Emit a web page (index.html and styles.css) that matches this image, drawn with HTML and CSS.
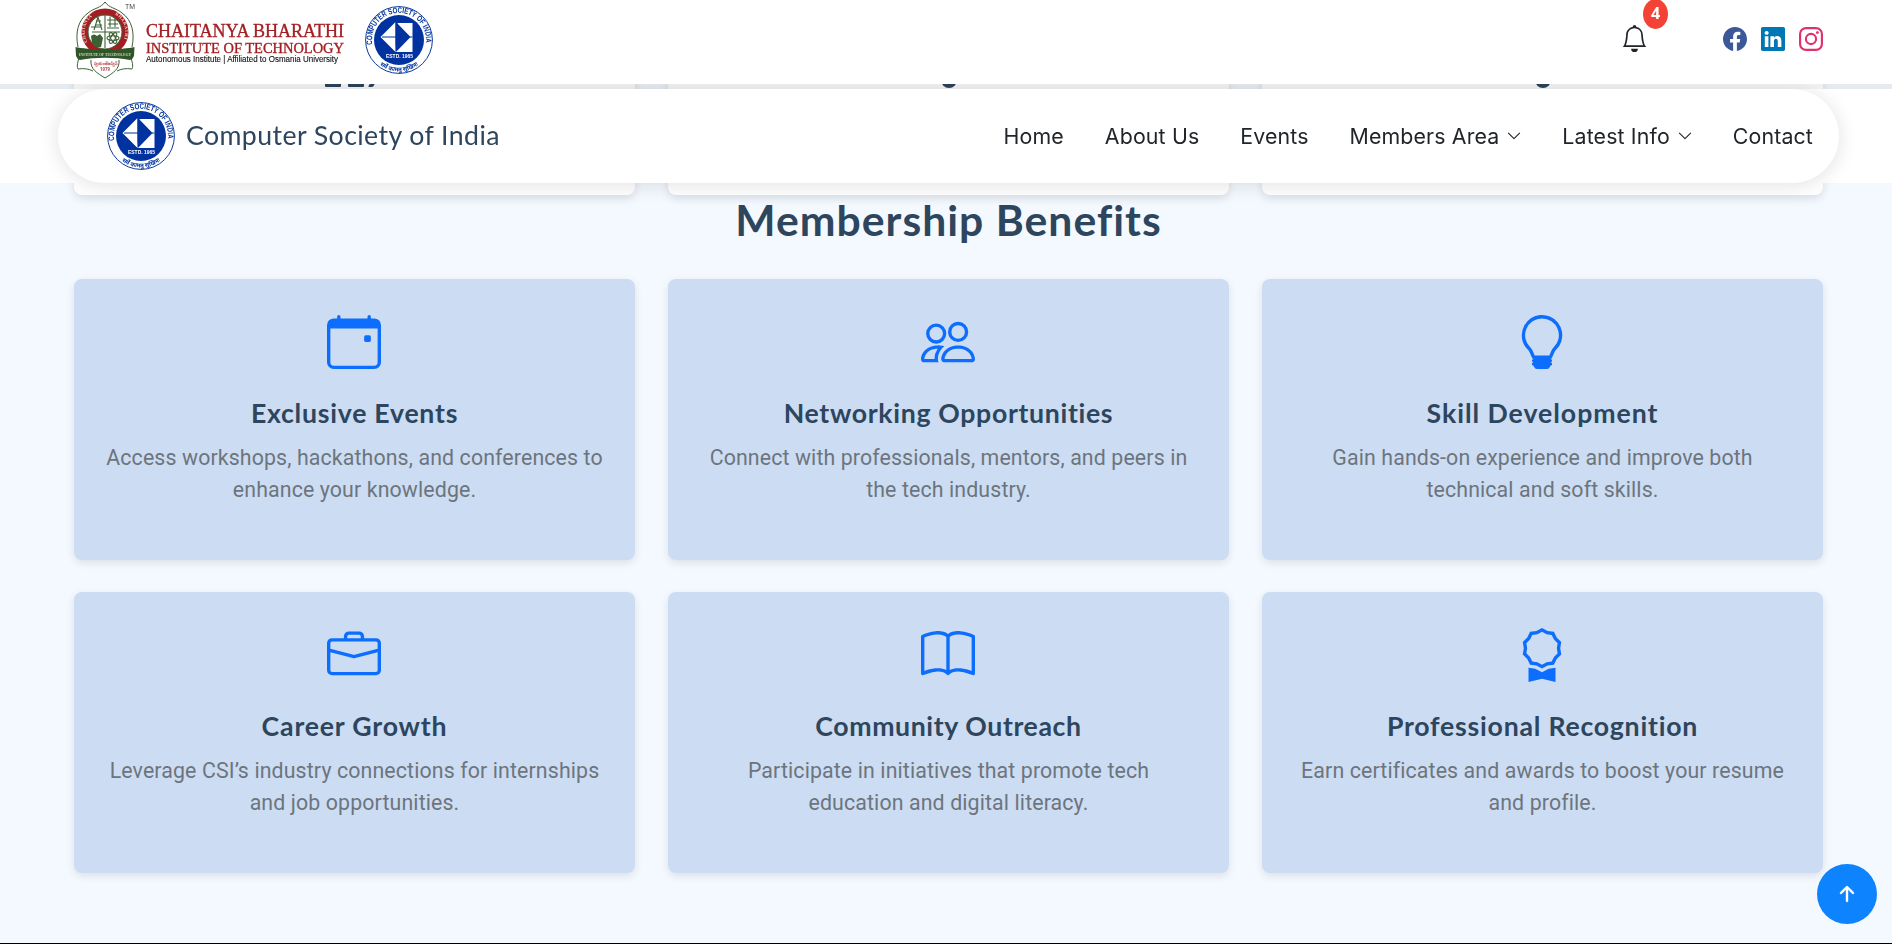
FILE: index.html
```html
<!DOCTYPE html>
<html lang="en">
<head>
<meta charset="utf-8">
<title>Computer Society of India</title>
<link rel="stylesheet" href="styles.css">
</head>
<body>
<header class="topbar">
  <div class="logos">
    <svg class="cbit" viewBox="0 0 276 84" width="276" height="84">
      <g fill="none" stroke="#3c6132" stroke-width="1">
        <path d="M31 2C27 8 20 8 14 13C4 20 1 33 4 47M31 2C35 8 42 8 48 13C58 20 61 33 58 47"/>
        <path d="M5 58C3 64 3 67 4 69C10 68 15 69 19 71M57 58C59 64 59 67 58 69C52 68 47 69 43 71"/>
        <path d="M17 60C16 69 23 73 31 78C39 73 46 69 45 60"/>
      </g>
      <circle cx="31" cy="32" r="23.5" fill="#a31e22"/>
      <circle cx="31" cy="32" r="17" fill="#fff" stroke="#3c6132"/>
      <g fill="none" stroke="#3c6132" stroke-width="1.1">
        <path d="M18 32H46M31 15V48M20 30l4-13 4 13M21 25h7M22 21h5M33 20h12M34 24h10M36 17v10M41 17v10M17 27h10M33 28h12"/>
        <ellipse cx="39" cy="38" rx="6" ry="2.3"/><ellipse cx="39" cy="38" rx="6" ry="2.3" transform="rotate(60 39 38)"/><ellipse cx="39" cy="38" rx="6" ry="2.3" transform="rotate(120 39 38)"/>
      </g>
      <path d="M17 36q3-3 6 0l3-2 3 4-2 9h-6l-3-4Z" fill="#3c6132"/>
      <path d="M1.500 47C12 50 50 50 60.500 47L60 56Q59 59 56 60C40 57 22 57 6 60Q3 59 2 56Z" fill="#2f5529"/>
      <path id="arc-l" d="M13.500 42A20 20 0 0 1 22 14" fill="none"/>
      <path id="arc-r" d="M41 14.500A20 20 0 0 1 48.500 42" fill="none"/>
      <text class="ring"><textPath href="#arc-l" textLength="28">CHAITANYA</textPath></text>
      <text class="ring"><textPath href="#arc-r" textLength="28">BHARATHI</textPath></text>
      <text class="ribbon" x="5" y="55.500" textLength="52" lengthAdjust="spacingAndGlyphs">INSTITUTE OF TECHNOLOGY</text>
      <text class="motto" x="20" y="64.500" textLength="23" lengthAdjust="spacingAndGlyphs">స్వయం తేజస్విన్</text>
      <text class="motto" x="26" y="71" textLength="10" lengthAdjust="spacingAndGlyphs">1979</text>
      <text class="tm" x="51" y="8.500" textLength="10" lengthAdjust="spacingAndGlyphs">TM</text>
      <text class="name big" x="72" y="37" textLength="198" lengthAdjust="spacingAndGlyphs">CHAITANYA BHARATHI</text>
      <text class="name" x="72" y="53" textLength="198" lengthAdjust="spacingAndGlyphs">INSTITUTE OF TECHNOLOGY</text>
      <text class="affil" x="72" y="62" textLength="192" lengthAdjust="spacingAndGlyphs">Autonomous Institute | Affiliated to Osmania University</text>
    </svg>
    <svg class="seal" viewBox="0 0 68 68" width="68" height="68">
      <g id="seal">
        <circle cx="34" cy="34" r="33.4" fill="#fff" stroke="#0a3a9c" stroke-width="1"/>
        <circle cx="34" cy="34" r="25" fill="#0033a0"/>
        <path d="M15.500 31 30.500 16V46ZM32.500 17H47.500V46H30.500V45Z" fill="#fff"/>
        <path d="M30.500 15.500 45.500 31 30.500 46.500ZM17 30.400H31V31.500H17Z" fill="#0033a0"/>
        <path d="M45 30.500H47.500V31.500H45Z" fill="#0033a0"/>
        <path id="seal-top" d="M7.400 38.5A27 27 0 1 1 60.6 38.5" fill="none"/>
        <path id="seal-low" d="M12.500 57A31.500 31.500 0 0 0 55.500 57" fill="none"/>
        <text class="seal-name"><textPath href="#seal-top" textLength="92" lengthAdjust="spacingAndGlyphs">COMPUTER SOCIETY OF INDIA</textPath></text>
        <text class="seal-year" x="21" y="52" textLength="27" lengthAdjust="spacingAndGlyphs">ESTD. 1965</text>
        <text class="seal-motto"><textPath href="#seal-low" startOffset="3" textLength="41" lengthAdjust="spacingAndGlyphs">सर्वे कामतु सुखिनः</textPath></text>
      </g>
    </svg>
  </div>
  <div class="tools">
    <div class="bell">
      <svg viewBox="0 0 16 16" width="27" height="27" fill="#212529"><path d="M8 16a2 2 0 0 0 2-2H6a2 2 0 0 0 2 2M8 1.918l-.797.161A4 4 0 0 0 4 6c0 .628-.134 2.197-.459 3.742-.16.767-.376 1.566-.663 2.258h10.244c-.287-.692-.502-1.490-.663-2.258C12.134 8.197 12 6.628 12 6a4 4 0 0 0-3.203-3.920zM14.220 12c.223.447.481.801.78 1H1c.299-.199.557-.553.78-1C2.680 10.200 3 6.880 3 6c0-2.420 1.720-4.440 4.005-4.901a1 1 0 1 1 1.990 0A5 5 0 0 1 13 6c0 .88.32 4.200 1.220 6"/></svg>
      <span class="count">4</span>
    </div>
    <div class="social">
      <svg viewBox="0 0 16 16" width="24" height="24" fill="#3b5998"><path d="M16 8.049c0-4.446-3.582-8.050-8-8.050C3.580 0-.002 3.603-.002 8.050c0 4.017 2.926 7.347 6.750 7.951v-5.625h-2.030V8.050H6.750V6.275c0-2.017 1.195-3.131 3.022-3.131.876 0 1.791.157 1.791.157v1.980h-1.009c-.993 0-1.303.621-1.303 1.258v1.510h2.218l-.354 2.326H9.250V16c3.824-.604 6.750-3.934 6.750-7.951"/></svg>
      <svg viewBox="0 0 16 16" width="24" height="24" fill="#0077b5"><path d="M0 1.146C0 .513.526 0 1.175 0h13.650C15.474 0 16 .513 16 1.146v13.708c0 .633-.526 1.146-1.175 1.146H1.175C.526 16 0 15.487 0 14.854zm4.943 12.248V6.169H2.542v7.225zm-1.200-8.212c.837 0 1.358-.554 1.358-1.248-.015-.709-.52-1.248-1.342-1.248S2.400 3.226 2.400 3.934c0 .694.521 1.248 1.327 1.248zm4.908 8.212V9.359c0-.216.016-.432.08-.586.173-.431.568-.878 1.232-.878.869 0 1.216.662 1.216 1.634v3.865h2.401V9.250c0-2.220-1.184-3.252-2.764-3.252-1.274 0-1.845.7-2.165 1.193v.025h-.016l.016-.025V6.169h-2.400c.03.678 0 7.225 0 7.225z"/></svg>
      <svg viewBox="0 0 16 16" width="24" height="24"><rect x=".72" y=".72" width="14.560" height="14.560" rx="4" fill="none" stroke="#e1306c" stroke-width="1.440"/><circle cx="8" cy="8" r="3.390" fill="none" stroke="#e1306c" stroke-width="1.440"/><circle cx="12.270" cy="3.730" r=".96" fill="#e1306c"/></svg>
    </div>
  </div>
</header>

<div class="navband">
  <nav class="pill">
    <a class="brand"><svg class="seal" viewBox="0 0 68 68" width="68" height="68"><use href="#seal"/></svg><span>Computer Society of India</span></a>
    <ul class="menu">
      <li>Home</li><li>About Us</li><li>Events</li>
      <li>Members Area <svg class="chev" viewBox="0 0 16 16"><path d="M1.600 4.600 8 11l6.400-6.400"/></svg></li>
      <li>Latest Info <svg class="chev" viewBox="0 0 16 16"><path d="M1.600 4.600 8 11l6.400-6.400"/></svg></li>
      <li>Contact</li>
    </ul>
  </nav>
</div>

<main>
  <div class="stats">
    <div class="stat"><i class="foot f1"></i><i class="foot f2"></i><i class="foot f3"></i></div>
    <div class="stat"><i class="tail"></i></div>
    <div class="stat"><i class="tail"></i></div>
  </div>
  <h2>Membership Benefits</h2>
  <div class="grid">
    <article class="card">
      <svg class="icon" viewBox="0 0 16 16"><path d="M11 6.500a.5.500 0 0 1 .5-.5h1a.5.500 0 0 1 .5.500v1a.5.500 0 0 1-.5.500h-1a.5.500 0 0 1-.5-.5z"/><path d="M3.500 0a.5.500 0 0 1 .5.500V1h8V.5a.5.500 0 0 1 1 0V1h1a2 2 0 0 1 2 2v11a2 2 0 0 1-2 2H2a2 2 0 0 1-2-2V3a2 2 0 0 1 2-2h1V.5a.5.500 0 0 1 .5-.5M1 4v10a1 1 0 0 0 1 1h12a1 1 0 0 0 1-1V4z"/></svg>
      <h3 class="t1">Exclusive Events</h3>
      <p>Access workshops, hackathons, and conferences to enhance your knowledge.</p>
    </article>
    <article class="card">
      <svg class="icon" viewBox="0 0 16 16"><path d="M15 14s1 0 1-1-1-4-5-4-5 3-5 4 1 1 1 1zm-7.978-1L7 12.996c.001-.264.167-1.030.76-1.720C8.312 10.629 9.282 10 11 10c1.717 0 2.687.63 3.240 1.276.593.69.758 1.457.76 1.720l-.008.002-.014.002zM11 7a2 2 0 1 0 0-4 2 2 0 0 0 0 4m3-2a3 3 0 1 1-6 0 3 3 0 0 1 6 0M6.936 9.280a6 6 0 0 0-1.230-.247A7 7 0 0 0 5 9c-4 0-5 3-5 4q0 1 1 1h4.216A2.240 2.240 0 0 1 5 13c0-1.010.377-2.042 1.090-2.904.243-.294.526-.569.846-.816M4.920 10A5.500 5.500 0 0 0 4 13H1c0-.26.164-1.030.76-1.724.545-.636 1.492-1.256 3.160-1.275ZM1.500 5.500a3 3 0 1 1 6 0 3 3 0 0 1-6 0m3-2a2 2 0 1 0 0 4 2 2 0 0 0 0-4"/></svg>
      <h3 class="t2">Networking Opportunities</h3>
      <p>Connect with professionals, mentors, and peers in the tech industry.</p>
    </article>
    <article class="card">
      <svg class="icon" viewBox="0 0 16 16"><path d="M2 6a6 6 0 1 1 10.174 4.310c-.203.196-.359.4-.453.619l-.762 1.769A.5.500 0 0 1 10.500 13a.5.500 0 0 1 0 1 .5.500 0 0 1 0 1l-.224.447a1 1 0 0 1-.894.553H6.618a1 1 0 0 1-.894-.553L5.500 15a.5.500 0 0 1 0-1 .5.500 0 0 1 0-1 .5.500 0 0 1-.46-.302l-.761-1.770a2 2 0 0 0-.453-.618A5.980 5.980 0 0 1 2 6m6-5a5 5 0 0 0-3.479 8.592c.263.254.514.564.676.941L5.830 12h4.342l.632-1.467c.162-.377.413-.687.676-.941A5 5 0 0 0 8 1"/></svg>
      <h3 class="t3">Skill Development</h3>
      <p class="narrow">Gain hands-on experience and improve both technical and soft skills.</p>
    </article>
    <article class="card">
      <svg class="icon" viewBox="0 0 16 16"><path d="M6.500 1A1.500 1.500 0 0 0 5 2.500V3H1.500A1.500 1.500 0 0 0 0 4.500v8A1.500 1.500 0 0 0 1.500 14h13a1.500 1.500 0 0 0 1.500-1.500v-8A1.500 1.500 0 0 0 14.500 3H11v-.5A1.500 1.500 0 0 0 9.500 1zm0 1h3a.5.500 0 0 1 .5.500V3H6v-.5a.5.500 0 0 1 .5-.5m1.886 6.914L15 7.151V12.500a.5.500 0 0 1-.5.500h-13a.5.500 0 0 1-.5-.5V7.150l6.614 1.764a1.500 1.500 0 0 0 .772 0M1.500 4h13a.5.500 0 0 1 .5.500v1.616L8.129 7.948a.5.500 0 0 1-.258 0L1 6.116V4.500a.5.500 0 0 1 .5-.5"/></svg>
      <h3 class="t4">Career Growth</h3>
      <p>Leverage CSI’s industry connections for internships and job opportunities.</p>
    </article>
    <article class="card">
      <svg class="icon" viewBox="0 0 16 16"><path d="M1 2.828c.885-.37 2.154-.769 3.388-.893 1.330-.134 2.458.063 3.112.752v9.746c-.935-.53-2.120-.603-3.213-.493-1.180.12-2.370.461-3.287.811zm7.500-.141c.654-.689 1.782-.886 3.112-.752 1.234.124 2.503.523 3.388.893v9.923c-.918-.35-2.107-.692-3.287-.81-1.094-.111-2.278-.039-3.213.492zM8 1.783C7.015.936 5.587.81 4.287.94c-1.514.153-3.042.672-3.994 1.105A.5.500 0 0 0 0 2.500v11a.5.500 0 0 0 .707.455c.882-.4 2.303-.881 3.680-1.020 1.409-.142 2.590.087 3.223.877a.5.500 0 0 0 .78 0c.633-.79 1.814-1.019 3.222-.877 1.378.139 2.800.62 3.681 1.020A.5.500 0 0 0 16 13.500v-11a.5.500 0 0 0-.293-.455c-.952-.433-2.480-.952-3.994-1.105C10.413.809 8.985.936 8 1.783"/></svg>
      <h3 class="t5">Community Outreach</h3>
      <p class="narrow">Participate in initiatives that promote tech education and digital literacy.</p>
    </article>
    <article class="card">
      <svg class="icon" viewBox="0 0 16 16"><path d="M9.669.864 8 0 6.331.864l-1.858.282-.842 1.680-1.337 1.320L2.600 6l-.306 1.854 1.337 1.320.842 1.680 1.858.282L8 12l1.669-.864 1.858-.282.842-1.680 1.337-1.320L13.400 6l.306-1.854-1.337-1.320-.842-1.680zm1.196 1.193.684 1.365 1.086 1.072L12.387 6l.248 1.506-1.086 1.072-.684 1.365-1.510.229L8 10.874l-1.355-.702-1.510-.229-.684-1.365-1.086-1.072L3.614 6l-.25-1.506 1.087-1.072.684-1.365 1.510-.229L8 1.126l1.356.702z"/><path d="M4 11.794V16l4-1 4 1v-4.206l-2.018.306L8 13.126 6.018 12.100z"/></svg>
      <h3 class="t6">Professional Recognition</h3>
      <p>Earn certificates and awards to boost your resume and profile.</p>
    </article>
  </div>
</main>

<a class="to-top"><svg viewBox="0 0 16 16" width="32" height="32" fill="#fff" stroke="#fff" stroke-width=".2"><path d="M8 12a.5.500 0 0 0 .5-.5V5.707l2.146 2.147a.5.500 0 0 0 .708-.708l-3-3a.5.500 0 0 0-.708 0l-3 3a.5.500 0 1 0 .708.708L7.500 5.707V11.500a.5.500 0 0 0 .5.500"/></svg></a>
</body>
</html>
```
FILE: styles.css
```css
* { box-sizing: border-box; }
html, body { height: 944px; overflow: hidden; }
body {
  margin: 0;
  position: relative;
  background: #f4f9ff;
  border-bottom: 1px solid #000;
  font-family: Roboto, sans-serif;
  color: #212529;
}
svg { display: block; flex: none; overflow: visible; }

/* seal lettering */
.seal-name { font: bold 8px "Liberation Sans", sans-serif; fill: #0033a0; }
.seal-year { font: bold 5.5px "Liberation Sans", sans-serif; fill: #fff; }
.seal-motto { font: bold 6px "Noto Sans", sans-serif; fill: #0033a0; }

/* top bar */
.topbar {
  position: fixed;
  inset: 0 0 auto 0;
  z-index: 3;
  height: 84px;
  padding: 0 69px 0 74px;
  display: flex;
  justify-content: space-between;
  background: #fff;
}
.logos { display: flex; gap: 15px; }
.logos .seal { margin-top: 6px; }
.ring { font: bold 4.5px "Liberation Serif", serif; fill: #f3d9d0; }
.ribbon { font: bold 4.5px "Liberation Serif", serif; fill: #cfdcc8; }
.motto { font: bold 4.5px "Noto Sans", sans-serif; fill: #b5484a; }
.tm { font: 6.5px "Liberation Sans", sans-serif; fill: #444; }
.name { font: 14.6px "Liberation Serif", serif; fill: #a31e22; stroke: #a31e22; stroke-width: .35px; }
.name.big { font-size: 18.5px; }
.affil { font: 8.5px "Liberation Sans", sans-serif; fill: #111; stroke: #111; stroke-width: .12px; }
.tools { display: flex; gap: 75px; }
.bell { position: relative; padding-top: 25px; }
.count {
  position: absolute;
  left: 22px;
  top: -1px;
  width: 25px;
  height: 30px;
  border-radius: 50%;
  background: #f44336;
  color: #fff;
  font: bold 16px/28px "Open Sans", sans-serif;
  text-align: center;
}
.social { display: flex; gap: 14px; padding-top: 27px; }

/* navigation */
.navband {
  position: fixed;
  inset: 84px 0 auto 0;
  z-index: 2;
  padding: 5px 53px 0 58px;
  background: linear-gradient(rgba(0, 0, 0, .055) 0 5px, rgba(255, 255, 255, .97) 5px);
  clip-path: inset(0 0 -30px 0);
}
.pill {
  height: 94px;
  padding: 0 26px 0 49px;
  border-radius: 50px;
  background: #fff;
  box-shadow: 0 2px 20px rgba(0, 0, 0, .12);
  display: flex;
  align-items: center;
  justify-content: space-between;
}
.brand { display: flex; align-items: center; gap: 11px; }
.brand span {
  padding-bottom: 2px;
  font: 26.67px/34px Lato, sans-serif;
  letter-spacing: .43px;
  color: #2d465e;
}
.menu {
  display: flex;
  gap: 40.9px;
  margin: 0;
  padding: 0;
  list-style: none;
  font: 21.33px/28px Inter, sans-serif;
  letter-spacing: .15px;
}
.menu li { display: flex; align-items: center; gap: 8px; white-space: nowrap; }
.chev {
  width: 14px;
  height: 14px;
  fill: none;
  stroke: #212529;
  stroke-width: 1.25;
  stroke-linecap: round;
  stroke-linejoin: round;
}

/* content */
main { padding: 0 69px 0 74px; }
.stats, .grid { display: grid; grid-template-columns: repeat(3, 561px); column-gap: 33px; }
.stat {
  position: relative;
  height: 195px;
  border-radius: 0 0 8px 8px;
  background: #fff;
  box-shadow: 0 4px 8px rgba(0, 0, 0, .1);
}
.foot, .tail { position: absolute; background: #2d465e; }
.foot { top: 80px; height: 7px; border-radius: 1px; }
.f1 { left: 250.5px; width: 16.5px; }
.f2 { left: 273.5px; width: 16.5px; }
.f3 { left: 296px; width: 5px; transform: skewX(-30deg); }
.tail { left: 273px; top: 72px; width: 16px; height: 16px; border-radius: 50%; }
h2 {
  margin: 0 0 35px;
  font: bold 42.67px/49px Lato, sans-serif;
  letter-spacing: 1.02px;
  text-align: center;
  color: #2d465e;
}
.grid { row-gap: 32px; }
.card {
  height: 281px;
  padding: 36px 27px 0;
  border-radius: 8px;
  background: #ccdcf3;
  box-shadow: 0 3px 8px rgba(0, 0, 0, .1);
  text-align: center;
}
.icon { width: 54px; height: 54px; margin: 0 auto 0 226.4px; fill: #0d6efd; }
h3 {
  margin: 28px 0 13px;
  font: bold 26.67px/32px Lato, sans-serif;
  color: #2d465e;
}
.t1 { letter-spacing: .75px; }
.t2 { letter-spacing: .67px; }
.t3 { letter-spacing: .97px; }
.t4 { letter-spacing: .82px; }
.t5 { letter-spacing: .6px; }
.t6 { letter-spacing: .77px; }
.card p {
  margin: 0;
  font-size: 21.33px;
  line-height: 32px;
  letter-spacing: .12px;
  color: #6c757d;
}
.card .narrow { padding: 0 30px; }

.to-top {
  position: fixed;
  right: 15px;
  bottom: 20px;
  z-index: 4;
  width: 60px;
  height: 60px;
  border-radius: 50%;
  background: #0d83fd;
  display: grid;
  place-items: center;
}
```
